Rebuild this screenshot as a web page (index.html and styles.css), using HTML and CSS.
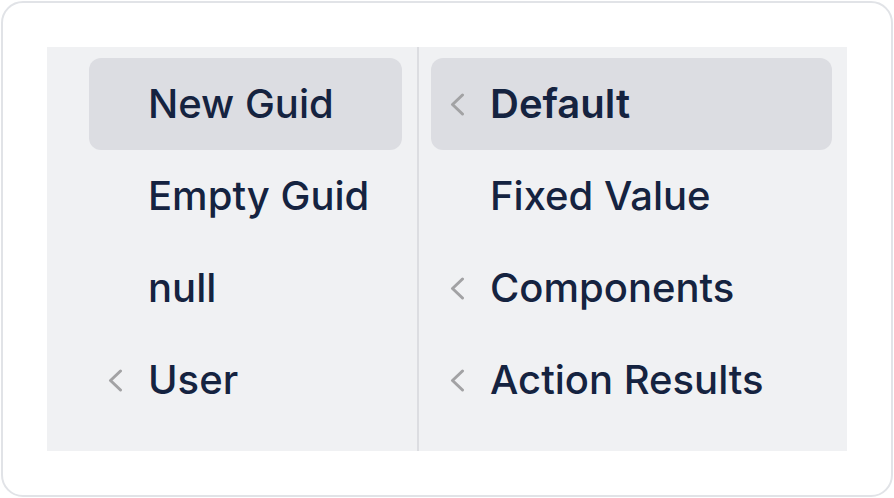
FILE: index.html
```html
<!DOCTYPE html>
<html>
<head>
<meta charset="utf-8">
<link rel="stylesheet" href="styles.css">
</head>
<body>
<div class="card">
  <div class="panel">
    <div class="col col-left">
      <div class="item active"><span class="chev"></span><span class="label">New Guid</span></div>
      <div class="item"><span class="chev"></span><span class="label">Empty Guid</span></div>
      <div class="item"><span class="chev"></span><span class="label">null</span></div>
      <div class="item"><span class="chev"><svg viewBox="0 0 15 23" width="15" height="23"><path d="M12.5 2 L2.5 11.5 L12.5 21" fill="none" stroke="#a2a2a4" stroke-width="3" stroke-linecap="round" stroke-linejoin="round"/></svg></span><span class="label">User</span></div>
    </div>
    <div class="divider"></div>
    <div class="col col-right">
      <div class="item active"><span class="chev"><svg viewBox="0 0 15 23" width="15" height="23"><path d="M12.5 2 L2.5 11.5 L12.5 21" fill="none" stroke="#a2a2a4" stroke-width="3" stroke-linecap="round" stroke-linejoin="round"/></svg></span><span class="label strong">Default</span></div>
      <div class="item"><span class="chev"></span><span class="label">Fixed Value</span></div>
      <div class="item"><span class="chev"><svg viewBox="0 0 15 23" width="15" height="23"><path d="M12.5 2 L2.5 11.5 L12.5 21" fill="none" stroke="#a2a2a4" stroke-width="3" stroke-linecap="round" stroke-linejoin="round"/></svg></span><span class="label">Components</span></div>
      <div class="item"><span class="chev"><svg viewBox="0 0 15 23" width="15" height="23"><path d="M12.5 2 L2.5 11.5 L12.5 21" fill="none" stroke="#a2a2a4" stroke-width="3" stroke-linecap="round" stroke-linejoin="round"/></svg></span><span class="label">Action Results</span></div>
    </div>
  </div>
</div>
</body>
</html>
```

FILE: styles.css
```css
html, body {
  margin: 0;
  padding: 0;
  background: #ffffff;
}
body {
  font-family: Inter, "Noto Sans", sans-serif;
  width: 894px;
  height: 498px;
  overflow: hidden;
}
.card {
  box-sizing: border-box;
  margin: 1px;
  width: 892px;
  height: 496px;
  border: 2px solid #e1e3e7;
  border-radius: 22px;
  padding: 44px;
  background: #ffffff;
}
.panel {
  display: flex;
  width: 800px;
  height: 404px;
  background: #f0f1f3;
}
.col {
  box-sizing: border-box;
  display: flex;
  flex-direction: column;
  padding-top: 11px;
}
.col-left {
  width: 370px;
  padding-left: 42px;
  padding-right: 15px;
}
.col-right {
  width: 428px;
  padding-left: 12px;
  padding-right: 15px;
}
.divider {
  width: 2px;
  background: #dcdde1;
}
.item {
  display: flex;
  align-items: center;
  height: 92px;
  padding-left: 19px;
  border-radius: 12px;
}
.item.active {
  background: #dcdde2;
}
.chev {
  width: 40px;
  height: 23px;
  display: flex;
  align-items: center;
}
.chev svg {
  display: block;
}
.label {
  font-size: 40px;
  font-weight: 500;
  color: #152340;
  letter-spacing: 0;
  line-height: 1;
}
.label.strong {
  font-weight: 600;
}
```
